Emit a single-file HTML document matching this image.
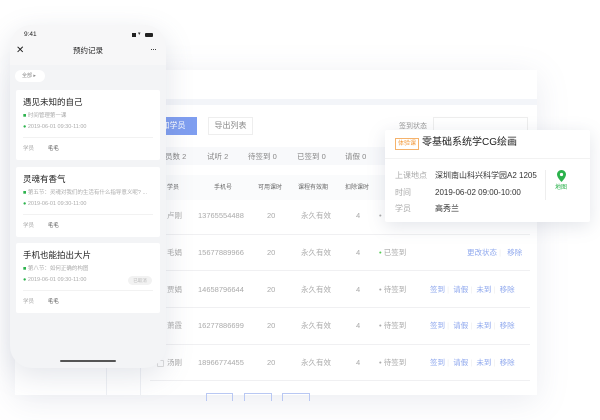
<!DOCTYPE html>
<html><head><meta charset="utf-8"><style>
*{margin:0;padding:0;box-sizing:border-box}
body{width:600px;height:420px;background:#fff;position:relative;overflow:hidden;font-family:"Liberation Sans","Noto Sans CJK SC",sans-serif;color:#333}
.a{position:absolute;white-space:nowrap;line-height:1}
.panel{position:absolute;left:15px;top:70px;width:522px;height:325px;background:#fff;box-shadow:0 6px 30px rgba(120,130,160,.15)}
.g{color:#999;font-size:7px}
.t{font-size:7.5px;color:#aaa}
.lk{color:#8fa8ee;font-size:7.5px}
.row{position:absolute;left:150px;width:380px;height:1px;background:#f0f0f2}
.phone{position:absolute;left:10px;top:25px;width:156px;height:343px;border-radius:22px;background:#f3f4f6;box-shadow:0 8px 28px rgba(100,110,140,.18);overflow:hidden}
.card{position:absolute;left:6px;width:144px;background:#fff;border-radius:2px}
.pop{position:absolute;left:385px;top:130px;width:205px;height:92px;background:#fff;box-shadow:0 4px 18px rgba(100,110,140,.18);border-radius:2px}
</style></head><body>
<div class="panel">
 <div style="position:absolute;left:0;top:29px;width:522px;height:6px;background:#f3f5f9"></div>
 <div style="position:absolute;left:91px;top:35px;width:1px;height:290px;background:#eef0f4"></div>
 <div style="position:absolute;left:125px;top:35px;width:1px;height:290px;background:#eef0f4"></div>
</div>
<div class="a" style="left:150px;top:117px;width:47px;height:18px;background:#7f9ef0;color:#fff;font-size:8px;line-height:18px;text-align:center">加学员</div>
<div class="a" style="left:208px;top:117px;width:45px;height:18px;border:1px solid #eee;color:#888;font-size:8px;line-height:16px;text-align:center">导出列表</div>
<div class="a g" style="left:399px;top:123px">签到状态</div>
<div class="a" style="left:433px;top:117px;width:95px;height:18px;border:1px solid #eee"></div>
<div class="a" style="left:150px;top:147px;width:235px;height:18px;background:#f8f9fb"></div>
<div class="a" style="left:165px;top:153px;font-size:7.5px;color:#888">员数 2</div>
<div class="a" style="left:207px;top:153px;font-size:7.5px;color:#888">试听 2</div>
<div class="a" style="left:248px;top:153px;font-size:7.5px;color:#888">待签到 0</div>
<div class="a" style="left:297px;top:153px;font-size:7.5px;color:#888">已签到 0</div>
<div class="a" style="left:345px;top:153px;font-size:7.5px;color:#888">请假 0</div>
<div class="a" style="left:150px;top:175px;width:380px;height:25px;background:#fafbfc"></div>
<div class="a" style="font-size:6px;color:#666;left:167px;top:185px">学员</div>
<div class="a" style="font-size:6px;color:#666;left:214px;top:185px">手机号</div>
<div class="a" style="font-size:6px;color:#666;left:258px;top:185px">可用课时</div>
<div class="a" style="font-size:6px;color:#666;left:298px;top:185px">课程有效期</div>
<div class="a" style="font-size:6px;color:#666;left:345px;top:185px">扣除课时</div>

<div class="a t" style="left:167px;top:212px">卢刚</div><div class="a t" style="left:198px;top:212px">13765554488</div><div class="a t" style="left:267px;top:212px">20</div><div class="a t" style="left:301px;top:212px">永久有效</div><div class="a t" style="left:356px;top:212px">4</div><div class="a t" style="left:379px;top:212px">•</div>
<div class="row" style="top:234px"></div>
<div class="a t" style="left:167px;top:249px">毛娟</div><div class="a t" style="left:198px;top:249px">15677889966</div><div class="a t" style="left:267px;top:249px">20</div><div class="a t" style="left:301px;top:249px">永久有效</div><div class="a t" style="left:356px;top:249px">4</div><div class="a t" style="left:379px;top:249px"><span style="color:#5c5">•</span> 已签到</div><div class="a lk" style="left:467px;top:249px">更改状态 <span style="color:#eee">|</span>&nbsp;&nbsp; 移除</div>
<div class="row" style="top:270px"></div>
<div class="a t" style="left:167px;top:286px">贾娟</div><div class="a t" style="left:198px;top:286px">14658796644</div><div class="a t" style="left:267px;top:286px">20</div><div class="a t" style="left:301px;top:286px">永久有效</div><div class="a t" style="left:356px;top:286px">4</div><div class="a t" style="left:379px;top:286px">• 待签到</div><div class="a lk" style="left:430px;top:286px">签到 <span style="color:#eee">|</span>&nbsp; 请假 <span style="color:#eee">|</span>&nbsp; 未到 <span style="color:#eee">|</span>&nbsp; 移除</div>
<div class="row" style="top:307px"></div>
<div class="a t" style="left:167px;top:322px">萧霞</div><div class="a t" style="left:198px;top:322px">16277886699</div><div class="a t" style="left:267px;top:322px">20</div><div class="a t" style="left:301px;top:322px">永久有效</div><div class="a t" style="left:356px;top:322px">4</div><div class="a t" style="left:379px;top:322px">• 待签到</div><div class="a lk" style="left:430px;top:322px">签到 <span style="color:#eee">|</span>&nbsp; 请假 <span style="color:#eee">|</span>&nbsp; 未到 <span style="color:#eee">|</span>&nbsp; 移除</div>
<div class="row" style="top:344px"></div>
<div class="a t" style="left:167px;top:359px">汤刚</div><div class="a t" style="left:198px;top:359px">18966774455</div><div class="a t" style="left:267px;top:359px">20</div><div class="a t" style="left:301px;top:359px">永久有效</div><div class="a t" style="left:356px;top:359px">4</div><div class="a t" style="left:379px;top:359px">• 待签到</div><div class="a lk" style="left:430px;top:359px">签到 <span style="color:#eee">|</span>&nbsp; 请假 <span style="color:#eee">|</span>&nbsp; 未到 <span style="color:#eee">|</span>&nbsp; 移除</div>
<div class="a" style="left:157px;top:360px;width:7px;height:7px;border:1px solid #ddd;border-radius:1px"></div>
<div class="row" style="top:380px"></div>
<div class="a" style="left:206px;top:393px;width:27px;height:8px;border:1px solid #b9c8f3;border-bottom:none"></div>
<div class="a" style="left:244px;top:393px;width:28px;height:8px;border:1px solid #b9c8f3;border-bottom:none"></div>
<div class="a" style="left:282px;top:393px;width:28px;height:8px;border:1px solid #b9c8f3;border-bottom:none"></div>

<div class="pop">
 <div class="a" style="left:10px;top:8px;border:1px solid #f5b26b;color:#f39a3c;font-size:6px;padding:2px 2px">体验课</div>
 <div class="a" style="left:37px;top:8px;font-size:10px;color:#222">零基础系统学CG绘画</div>
 <div style="position:absolute;left:0;top:28px;width:205px;height:1px;background:#f2f2f2"></div>
 <div class="a" style="left:10px;top:38px;font-size:8px;color:#aaa;line-height:16.5px">上课地点<br>时间<br>学员</div>
 <div class="a" style="left:50px;top:38px;font-size:8px;color:#333;line-height:16.5px">深圳南山科兴科学园A2 1205<br>2019-06-02 09:00-10:00<br>高秀兰</div>
 <div style="position:absolute;left:160px;top:40px;width:1px;height:30px;background:#eee"></div>
 <svg class="a" style="left:172px;top:40px" width="9" height="12" viewBox="0 0 9 12"><path d="M4.5 0C2 0 0 2 0 4.5 0 7.5 4.5 12 4.5 12S9 7.5 9 4.5C9 2 7 0 4.5 0z" fill="#2bb24c"/><circle cx="4.5" cy="4.5" r="1.6" fill="#fff"/></svg>
 <div class="a" style="left:170px;top:55px;font-size:6px;color:#2bb24c">地图</div>
</div>

<div class="phone">
 <div style="position:absolute;left:0;top:0;width:156px;height:40px;background:#f7f7f8"></div>
 <div class="a" style="left:14px;top:7px;font-size:6.5px;color:#222">9:41</div>
 <div class="a" style="left:122px;top:8px;width:4px;height:4px;background:#222"></div>
 <div class="a" style="left:128px;top:7px;font-size:5px">▾</div>
 <div class="a" style="left:135px;top:8px;width:8px;height:4px;background:#222;border-radius:1px"></div>
 <div class="a" style="left:6px;top:21px;font-size:10px;color:#222">✕</div>
 <div class="a" style="left:63px;top:22px;font-size:7.5px;color:#222">预约记录</div>
 <div class="a" style="left:140px;top:20px;font-size:9px;color:#222;letter-spacing:-1px">···</div>
 <div class="a" style="left:5px;top:45px;width:30px;height:12px;background:#fff;border-radius:6px;font-size:5px;color:#888;line-height:12px;padding-left:7px">全部 ▸</div>
 <div class="card" style="top:65px;height:70px">
  <div class="a" style="left:7px;top:8px;font-size:8.5px;color:#222">遇见未知的自己</div>
  <div class="a" style="left:7px;top:24px;font-size:5.5px;color:#aaa"><span style="color:#2bb24c">■</span> 时间管理第一课</div>
  <div class="a" style="left:7px;top:35px;font-size:5.5px;color:#aaa"><span style="color:#2bb24c">●</span> 2019-06-01 09:30-11:00</div>
  <div style="position:absolute;left:7px;top:47px;width:130px;height:1px;background:#f2f2f2"></div>
  <div class="a" style="left:7px;top:57px;font-size:5.5px;color:#aaa">学员&nbsp;&nbsp;&nbsp;&nbsp;&nbsp;&nbsp;&nbsp;&nbsp;&nbsp;<span style="color:#555">毛毛</span></div>
 </div>
 <div class="card" style="top:142px;height:70px">
  <div class="a" style="left:7px;top:8px;font-size:8.5px;color:#222">灵魂有香气</div>
  <div class="a" style="left:7px;top:24px;font-size:5.5px;color:#aaa"><span style="color:#2bb24c">■</span> 第五节：灵魂对我们的生活有什么指导意义呢? ...</div>
  <div class="a" style="left:7px;top:35px;font-size:5.5px;color:#aaa"><span style="color:#2bb24c">●</span> 2019-06-01 09:30-11:00</div>
  <div style="position:absolute;left:7px;top:47px;width:130px;height:1px;background:#f2f2f2"></div>
  <div class="a" style="left:7px;top:57px;font-size:5.5px;color:#aaa">学员&nbsp;&nbsp;&nbsp;&nbsp;&nbsp;&nbsp;&nbsp;&nbsp;&nbsp;<span style="color:#555">毛毛</span></div>
 </div>
 <div class="card" style="top:218px;height:70px">
  <div class="a" style="left:7px;top:8px;font-size:8.5px;color:#222">手机也能拍出大片</div>
  <div class="a" style="left:7px;top:24px;font-size:5.5px;color:#aaa"><span style="color:#2bb24c">■</span> 第八节：如何正确的构图</div>
  <div class="a" style="left:7px;top:35px;font-size:5.5px;color:#aaa"><span style="color:#2bb24c">●</span> 2019-06-01 09:30-11:00</div>
  <div class="a" style="left:112px;top:33px;width:24px;height:9px;background:#f2f2f2;border-radius:5px;font-size:4.5px;color:#bbb;line-height:9px;text-align:center">已取消</div>
  <div style="position:absolute;left:7px;top:47px;width:130px;height:1px;background:#f2f2f2"></div>
  <div class="a" style="left:7px;top:57px;font-size:5.5px;color:#aaa">学员&nbsp;&nbsp;&nbsp;&nbsp;&nbsp;&nbsp;&nbsp;&nbsp;&nbsp;<span style="color:#555">毛毛</span></div>
 </div>
 <div style="position:absolute;left:50px;top:335px;width:56px;height:2px;background:#555;border-radius:1px"></div>
</div>
</body></html>
